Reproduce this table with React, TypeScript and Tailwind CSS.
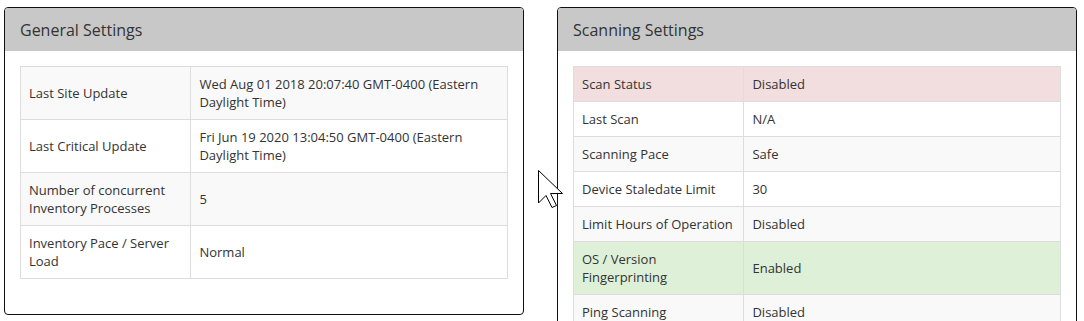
type Row = {
  label: string;
  value: string;
  tone?: "danger" | "success";
};

const general: Row[] = [
  { label: "Last Site Update", value: "Wed Aug 01 2018 20:07:40 GMT-0400 (Eastern Daylight Time)" },
  { label: "Last Critical Update", value: "Fri Jun 19 2020 13:04:50 GMT-0400 (Eastern Daylight Time)" },
  { label: "Number of concurrent Inventory Processes", value: "5" },
  { label: "Inventory Pace / Server Load", value: "Normal" },
];

const scanning: Row[] = [
  { label: "Scan Status", value: "Disabled", tone: "danger" },
  { label: "Last Scan", value: "N/A" },
  { label: "Scanning Pace", value: "Safe" },
  { label: "Device Staledate Limit", value: "30" },
  { label: "Limit Hours of Operation", value: "Disabled" },
  { label: "OS / Version Fingerprinting", value: "Enabled", tone: "success" },
  { label: "Ping Scanning", value: "Disabled" },
];

function rowBg(row: Row, i: number) {
  if (row.tone === "danger") return "bg-[#f2dede]";
  if (row.tone === "success") return "bg-[#dff0d8]";
  return i % 2 === 0 ? "bg-[#f9f9f9]" : "bg-white";
}

function SettingsPanel({ title, rows }: { title: string; rows: Row[] }) {
  return (
    <section className="w-[520px] shrink-0 overflow-hidden rounded-[4px] border border-[#111] bg-white">
      <div className="flex h-[43px] items-center bg-[#c8c8c8] px-[15px] text-[16px] text-[#333]">
        {title}
      </div>
      <div className="p-[15px]">
        <table className="mb-[20px] w-full border-collapse border border-[#ddd] text-[13px] leading-[18px] text-[#333]">
          <tbody>
            {rows.map((row, i) => (
              <tr key={row.label} className={rowBg(row, i)}>
                <td className="w-[35%] border border-[#ddd] px-[8px] py-[8px] align-middle">
                  {row.label}
                </td>
                <td className="border border-[#ddd] px-[8px] py-[8px] align-middle">{row.value}</td>
              </tr>
            ))}
          </tbody>
        </table>
      </div>
    </section>
  );
}

export default function App() {
  return (
    <main
      className="relative flex items-start gap-[33px] bg-white pl-[4px] pt-[7px]"
      style={{ fontFamily: '"Open Sans", "Noto Sans", sans-serif' }}
    >
      <SettingsPanel title="General Settings" rows={general} />
      <SettingsPanel title="Scanning Settings" rows={scanning} />

      {/* mouse pointer caught in the capture */}
      <svg
        className="pointer-events-none absolute left-[537px] top-[169px]"
        width="28"
        height="40"
        viewBox="0 0 28 40"
      >
        <path
          d="M1.5 1.5 L1.5 34 L9 26.5 L15 38.5 L19.5 36.5 L13.5 24.5 L25.5 24.5 Z"
          fill="white"
          stroke="black"
          strokeWidth="1"
        />
      </svg>
    </main>
  );
}
